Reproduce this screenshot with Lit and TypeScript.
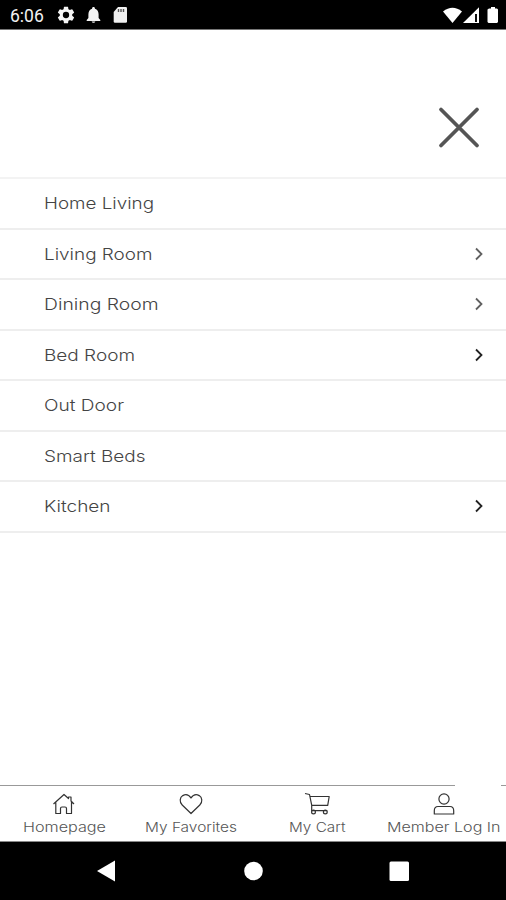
import { LitElement, html, svg, css } from "lit";
import { customElement } from "lit/decorators.js";

interface Item { label: string; width: number; arrow?: string; }

const ITEMS: Item[] = [
  { label: "Home Living", width: 110 },
  { label: "Living Room", width: 108.5, arrow: "#606060" },
  { label: "Dining Room", width: 114.5, arrow: "#606060" },
  { label: "Bed Room", width: 91, arrow: "#222" },
  { label: "Out Door", width: 80 },
  { label: "Smart Beds", width: 101.5 },
  { label: "Kitchen", width: 66.5, arrow: "#222" },
];

const TABS = [
  { label: "Homepage", width: 83, icon: svg`<path d="M3.500 12 14 2.500l4.500 4V5H21v4l3 3M5.800 10.500v11h4.700v-5q0-1.500 1.500-1.500h3q1.500 0 1.500 1.500v5h5V10"/>` },
  { label: "My Favorites", width: 92, icon: svg`<path d="M14 21.500 5.200 13C2.200 10 2.700 5.500 5.800 3.600 8.700 2 12 3 14 6c2-3 5.300-4 8.200-2.400C25.300 5.500 25.800 10 22.800 13Z"/>` },
  { label: "My Cart", width: 56.5, icon: svg`<path d="M2 1.500l4.500 1 2.200 10.700v6M7.200 4.500h19l-1.500 8.800H8.700M8.700 14v4.700h15.500"/><circle cx="10.500" cy="20" r="1.900"/><circle cx="22.300" cy="20" r="1.900"/>` },
  { label: "Member Log In", width: 113.5, icon: svg`<circle cx="14" cy="7" r="5.100"/><path d="M8 14.500h12q3.700 0 3.700 4.300v3.200H4.300v-3.200q0-4.300 3.700-4.300Z"/>` },
];

@customElement("app-root")
export class AppRoot extends LitElement {
  static styles = css`
    :host { display: flex; flex-direction: column; width: 506px; height: 900px; background: #fff; overflow: hidden; font-family: Inter, "Open Sans", sans-serif; }
    svg { display: block; flex: none; }
    .status { box-sizing: border-box; height: 30px; flex: none; background: #000; border-bottom: 1px solid #777; display: flex; align-items: center; padding: 1px 8px 0 10px; color: #f2f2f2; }
    .time { font: 400 17.500px/20px Roboto, sans-serif; width: 46px; padding-top: 2px; }
    .left, .right { display: flex; align-items: center; }
    .left { gap: 9px; }
    .right { margin-left: auto; }
    .top { box-sizing: border-box; height: 149px; flex: none; display: flex; justify-content: flex-end; padding: 75px 25px 0 0; border-bottom: 2px solid #f3f3f3; }
    .row { box-sizing: border-box; height: 50.500px; display: flex; align-items: center; justify-content: space-between; padding: 0 21px 0 44px; border-bottom: 2px solid #eee; }
    .label { overflow: visible; font-weight: 300; }
    .menu .label { font-size: 16.500px; fill: #444; }
    .space { flex: 1; }
    .tabs { box-sizing: border-box; height: 57px; flex: none; display: grid; grid-template-columns: repeat(4, 126.500px); position: relative; border-top: 1px solid #999; border-bottom: 1px solid #888; }
    .tabs::after { content: ""; position: absolute; right: 5px; top: -1px; width: 46px; height: 1px; background: #fff; }
    .tab { display: flex; flex-direction: column; align-items: center; padding: 6px 0 0 2px; }
    .tab .icon { fill: none; stroke: #333; stroke-width: 1.200; stroke-linejoin: round; }
    .tab .label { font-size: 13px; fill: #555; }
    .nav { height: 58px; flex: none; background: #000; display: grid; grid-template-columns: 147px 145px auto; align-items: center; padding-left: 96px; fill: #fff; }
  `;

  private text(label: string, width: number, height: number, baseline: number) {
    return html`<svg class="label" width=${width} height=${height}>
      <text x="0" y=${baseline} textLength=${width} lengthAdjust="spacingAndGlyphs">${label}</text>
    </svg>`;
  }

  render() {
    return html`
      <div class="status">
        <div class="time">6:06</div>
        <div class="left">
          <svg width="20" height="20" viewBox="0 0 24 24" fill="#f4f4f4"><path fill-rule="evenodd" d="M19.430 12.980a7.800 7.800 0 0 0 0-1.960l2.110-1.650a.5.5 0 0 0 .12-.64l-2-3.460a.5.5 0 0 0-.61-.22l-2.490 1a7.300 7.300 0 0 0-1.690-.98L14.490 2.420A.5.5 0 0 0 14 2h-4a.5.5 0 0 0-.49.42L9.130 5.070a7.700 7.700 0 0 0-1.690.98l-2.490-1a.5.5 0 0 0-.61.22l-2 3.460a.5.5 0 0 0 .12.64l2.110 1.650a7.900 7.900 0 0 0 0 1.960l-2.110 1.650a.5.5 0 0 0-.12.64l2 3.460c.12.22.39.3.61.22l2.490-1c.52.4 1.080.73 1.690.98l.38 2.650c.03.24.24.42.49.42h4c.25 0 .46-.18.49-.42l.38-2.650a7.700 7.700 0 0 0 1.690-.98l2.490 1c.23.09.49 0 .61-.22l2-3.460a.5.5 0 0 0-.12-.64ZM12 15.800a3.800 3.800 0 1 1 0-7.600 3.800 3.800 0 0 1 0 7.600Z"/></svg>
          <svg width="17" height="20" viewBox="0 0 17 20" fill="#f4f4f4"><path d="M8.500 2c-.9 0-1.400.6-1.400 1.300v.5C4.600 4.500 3.400 6.700 3.400 9.300V13L1.700 15v1h13.600v-1l-1.700-2V9.300c0-2.600-1.200-4.800-3.700-5.500v-.5c0-.7-.5-1.300-1.400-1.300ZM6.700 16.500h3.600c-.4 1.800-3.200 1.800-3.600 0Z"/></svg>
          <svg width="18" height="20" viewBox="0 0 18 20"><path fill="#f0f0f0" d="M7 2h7.700q1.300 0 1.300 1.300v13.200q0 1.300-1.300 1.300H4q-1.300 0-1.300-1.300V7Z"/><path stroke="#555" stroke-width="1.400" d="M7.500 4v3M10 4v3M12.500 4v3"/></svg>
        </div>
        <div class="right">
          <svg width="56" height="20" viewBox="0 0 56 20" fill="#fff"><path d="M1 6.500Q10.500-1 20 6.500L10.500 18Z"/><path d="M21 18 37 2.200V18Z"/><path d="M33 9h2V17h-2z" fill="#111"/><path d="M47 3.500h2V2h4v1.500h2l1 1V17l-1 1h-8.500l-1-1V4.500Z"/></svg>
        </div>
      </div>
      <div class="top">
        <svg width="44" height="44" viewBox="0 0 44 44"><path d="m4 4.500 36 36M40 4.500 4 40.500" fill="none" stroke="#555" stroke-width="3.800" stroke-linecap="round"/></svg>
      </div>
      <div class="menu">
        ${ITEMS.map(i => html`<div class="row">
          ${this.text(i.label, i.width, 20, 16)}
          ${i.arrow ? html`<svg width="12" height="16" viewBox="0 0 12 16"><path d="m3 2.500 5.500 5.500L3 13.500" fill="none" stroke=${i.arrow} stroke-width="1.800"/></svg>` : ""}
        </div>`)}
      </div>
      <div class="space"></div>
      <div class="tabs">
        ${TABS.map(t => html`<div class="tab">
          <svg class="icon" width="28" height="24" viewBox="0 0 28 24">${t.icon}</svg>
          ${this.text(t.label, t.width, 22, 16.2)}
        </div>`)}
      </div>
      <div class="nav">
        <svg width="20" height="24"><path d="M1 12 19 1.500v21Z"/></svg>
        <svg width="20" height="20"><circle cx="10.500" cy="10" r="9.300"/></svg>
        <svg width="22" height="22"><rect x="1.500" y="1.500" width="19.500" height="19.500" rx="1.500"/></svg>
      </div>`;
  }
}
